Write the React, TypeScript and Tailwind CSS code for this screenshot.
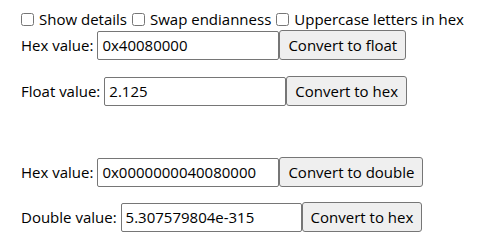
import React from "react";

const font = { fontFamily: '"Open Sans", "Noto Sans", sans-serif' };

function Check({ label }: { label: string }) {
  return (
    <label className="flex items-center mr-[5px]">
      <input type="checkbox" className="m-0 w-[13px] h-[13px] mr-[5px] accent-[#767676]" />
      <span>{label}</span>
    </label>
  );
}

function Row({ label, value, btn, w, cls }: { label: string; value: string; btn: string; w: string; cls: string }) {
  return (
    <div className={`flex items-center h-[30px] ${cls}`}>
      <span className="mr-[4px]">{label}</span>
      <input
        readOnly
        value={value}
        className={`h-[29px] ${w} border border-[#767676] rounded-[2px] pl-[4px] text-black outline-none bg-white`}
      />
      <button className="h-[30px] px-[8px] border border-[#767676] rounded-[3px] bg-[#efefef] text-black">
        {btn}
      </button>
    </div>
  );
}

export default function App() {
  return (
    <div className="w-[494px] h-[246px] bg-white text-black text-[15px] pt-[8px] pl-[21px]" style={font}>
      <div className="flex items-center h-[22px]">
        <Check label="Show details" />
        <Check label="Swap endianness" />
        <Check label="Uppercase letters in hex" />
      </div>
      <Row label="Hex value:" value="0x40080000" btn="Convert to float" w="w-[182px]" cls="" />
      <Row label="Float value:" value="2.125" btn="Convert to hex" w="w-[182px]" cls="mt-[16px]" />
      <Row label="Hex value:" value="0x0000000040080000" btn="Convert to double" w="w-[182px]" cls="mt-[51px]" />
      <Row label="Double value:" value="5.307579804e-315" btn="Convert to hex" w="w-[181px]" cls="mt-[15px]" />
    </div>
  );
}
